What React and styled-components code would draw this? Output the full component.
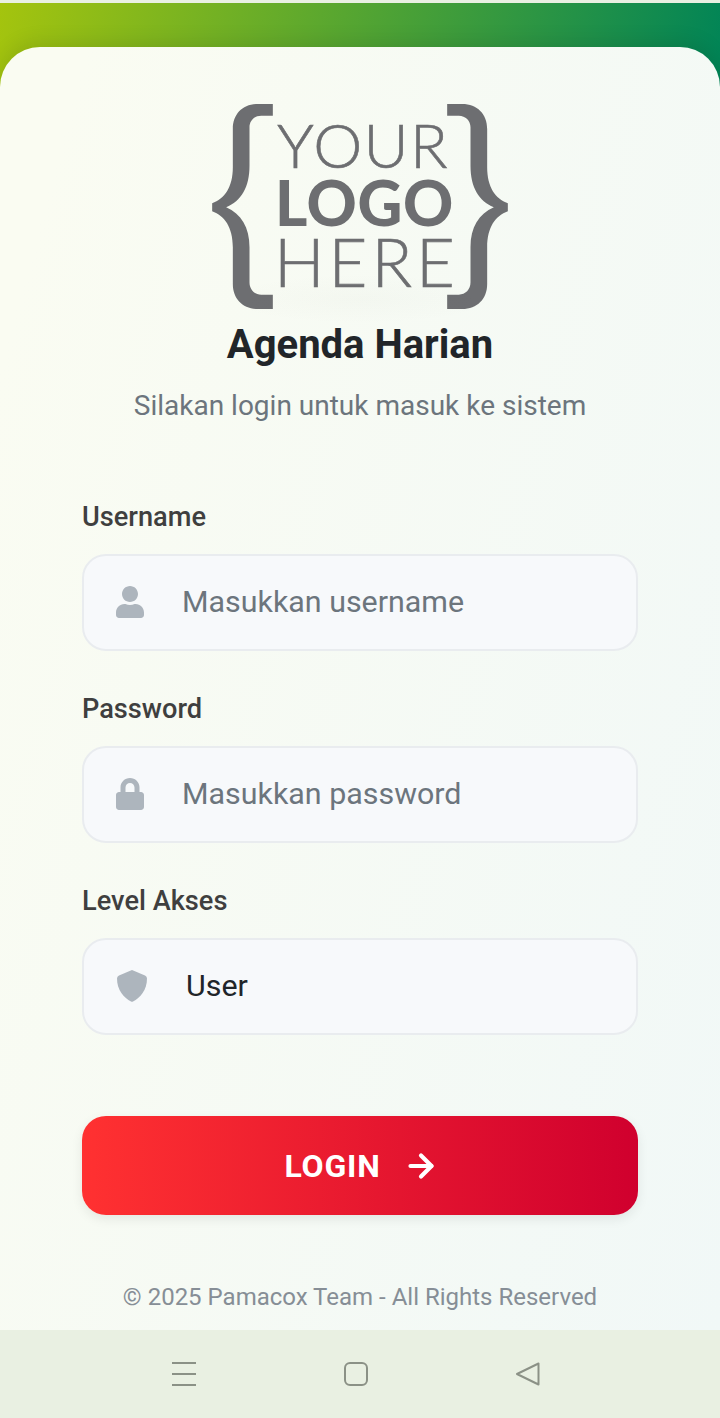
import styled, { createGlobalStyle } from "styled-components";
import { FaUser, FaLock } from "react-icons/fa";
import { ArrowRight } from "lucide-react";

const GlobalStyle = createGlobalStyle`
  * { box-sizing: border-box; }
  html, body { margin: 0; padding: 0; }
  body { font-family: Roboto, "Liberation Sans", sans-serif; background: #e9f0e2; }
`;

const Page = styled.div`
  width: 720px;
  height: 100vh;
  display: flex;
  flex-direction: column;
  overflow: hidden;
  background: #e9f0e2;
`;

const Main = styled.main`
  flex: 1;
  margin-top: 3px;
  padding-top: 44px;
  background: linear-gradient(100deg, #a4c40e 0%, #008457 100%) 0 0 / 100% 100px no-repeat;
  display: flex;
  flex-direction: column;
`;

const Card = styled.div`
  flex: 1;
  border-radius: 40px 40px 0 0;
  background: linear-gradient(105deg, #fafcf2 0%, #fafcf2 8%, #f1f8f7 100%);
  box-shadow: 0 -5px 20px rgba(0, 0, 0, 0.1);
  padding: 56px 82px 0;
  display: flex;
  flex-direction: column;
`;

const Logo = styled.div`
  position: relative;
  align-self: center;
  height: 207px;
  display: flex;
  align-items: center;
  color: #6d6e71;
  font-family: Lato, sans-serif;

  &::after {
    content: "";
    position: absolute;
    left: 10px;
    right: 10px;
    bottom: -14px;
    height: 50px;
    background: radial-gradient(closest-side, rgba(90, 90, 70, 0.025), transparent);
    pointer-events: none;
  }
`;

const Brace = styled.svg`
  width: 61px;
  height: 205px;
  flex: none;
  fill: #6d6e71;
  transform: ${(p) => (p.$flip ? "scaleX(-1)" : "none")};
  margin-left: ${(p) => (p.$flip ? "-5px" : "0")};
`;

const LogoText = styled.div`
  width: 175px;
  margin-left: 4px;
  padding-bottom: 8px;
  display: flex;
  flex-direction: column;
  align-items: flex-start;
`;

const LogoLine = styled.span`
  font-size: ${(p) => p.$size}px;
  font-weight: ${(p) => p.$weight};
  letter-spacing: ${(p) => p.$spacing}px;
  margin-left: ${(p) => p.$shift}px;
  -webkit-text-stroke: ${(p) => (p.$weight < 900 ? "0.6px" : "0")};
  line-height: 58.5px;
  white-space: nowrap;
`;

const Title = styled.h1`
  margin: 11px 0 0;
  font-size: 40px;
  line-height: 48px;
  font-weight: 700;
  color: #212529;
  text-align: center;
`;

const Subtitle = styled.p`
  margin: 20px 0 0;
  font-size: 28px;
  line-height: 34px;
  color: #6c757d;
  text-align: center;
`;

const Form = styled.form`
  margin-top: 78px;
  display: flex;
  flex-direction: column;
`;

const Field = styled.div`
  margin-bottom: 42px;
`;

const Label = styled.label`
  display: block;
  margin-bottom: 21px;
  font-size: 27.2px;
  line-height: 32px;
  font-weight: 500;
  color: #3f3f3f;
`;

const InputBox = styled.div`
  height: 97px;
  padding-left: 32px;
  padding-bottom: 1px;
  display: flex;
  align-items: center;
  background: #f7f9fb;
  border: 2px solid #e9ecef;
  border-radius: 24px;
`;

const IconSlot = styled.span`
  width: 34px;
  flex: none;
  display: flex;
  color: #adb5bd;
  font-size: 32px;

  & > svg.fa {
    margin-left: -2px;
  }
`;

const Shield = styled.svg`
  width: 30px;
  height: 32px;
  margin-left: 1px;
  fill: #adb5bd;
`;

const Input = styled.input`
  flex: 1;
  min-width: 0;
  margin: 0 0 2px 32px;
  border: 0;
  outline: 0;
  padding: 0;
  background: transparent;
  font: 400 30.4px Roboto, sans-serif;
  color: #212529;
  &::placeholder { color: #6c757d; opacity: 1; }
`;

const Select = styled.select`
  flex: 1;
  min-width: 0;
  margin: 0 0 2px 32px;
  border: 0;
  outline: 0;
  padding: 0 0 0 4px;
  appearance: none;
  background: transparent;
  font: 400 30.4px Roboto, sans-serif;
  color: #212529;
`;

const LoginButton = styled.button`
  margin-top: 39px;
  height: 99px;
  border: 0;
  border-radius: 24px;
  background: linear-gradient(90deg, #ff3131 0%, #d0002e 100%);
  box-shadow: 0 4px 12px rgba(0, 0, 0, 0.08);
  color: #fff;
  font: 700 32px Roboto, sans-serif;
  letter-spacing: 0.8px;
  padding-left: 9px;
  display: flex;
  align-items: center;
  justify-content: center;
  gap: 22px;
`;

const Footer = styled.p`
  margin: 67px 0 0;
  font-size: 24px;
  line-height: 30px;
  color: #868e96;
  text-align: center;
  white-space: nowrap;
`;

const NavBar = styled.nav`
  height: 88px;
  flex: none;
  padding: 0 180px 0 172px;
  display: flex;
  align-items: center;
  justify-content: space-between;
  background: #e9f0e2;
`;

const NavIcon = styled.svg`
  width: 24px;
  height: 24px;
  fill: none;
  stroke: #8b9186;
  stroke-width: 2;
  stroke-linejoin: round;
`;

const BracePath = () => (
  <path d="M250 40H205C160 40 130 70 130 115V230C130 290 105 325 68 338V362C105 375 130 410 130 470V580C130 625 160 655 205 655H250V612H215C195 612 180 597 180 575V470C180 410 155 370 110 350C155 330 180 290 180 225V110C180 90 195 75 215 75H250Z" />
);

export default function App() {
  return (
    <Page>
      <GlobalStyle />
      <Main>
        <Card>
          <Logo>
            <Brace viewBox="68 40 182 615"><BracePath /></Brace>
            <LogoText>
              <LogoLine $size={62} $weight={300} $spacing={1.3} $shift={0}>YOUR</LogoLine>
              <LogoLine $size={62} $weight={900} $spacing={0.6} $shift={-2}>LOGO</LogoLine>
              <LogoLine $size={67} $weight={300} $spacing={4} $shift={-3}>HERE</LogoLine>
            </LogoText>
            <Brace $flip viewBox="68 40 182 615"><BracePath /></Brace>
          </Logo>
          <Title>Agenda Harian</Title>
          <Subtitle>Silakan login untuk masuk ke sistem</Subtitle>
          <Form>
            <Field>
              <Label>Username</Label>
              <InputBox>
                <IconSlot><FaUser className="fa" /></IconSlot>
                <Input type="text" placeholder="Masukkan username" />
              </InputBox>
            </Field>
            <Field>
              <Label>Password</Label>
              <InputBox>
                <IconSlot><FaLock className="fa" /></IconSlot>
                <Input type="password" placeholder="Masukkan password" />
              </InputBox>
            </Field>
            <Field>
              <Label>Level Akses</Label>
              <InputBox>
                <IconSlot>
                  <Shield viewBox="0 0 30 32">
                    <path d="M15 0L28 5.5Q30 6.5 30 8.5C30 20 23 28 16 31.5Q15 32 14 31.5C7 28 0 20 0 8.5Q0 6.5 2 5.5Z" />
                  </Shield>
                </IconSlot>
                <Select defaultValue="user">
                  <option value="user">User</option>
                  <option value="admin">Admin</option>
                </Select>
              </InputBox>
            </Field>
            <LoginButton type="button">
              LOGIN
              <ArrowRight size={36} strokeWidth={2.8} />
            </LoginButton>
          </Form>
          <Footer>© 2025 Pamacox Team - All Rights Reserved</Footer>
        </Card>
      </Main>
      <NavBar>
        <NavIcon viewBox="0 0 24 24">
          <path d="M0 1H24M0 12H24M0 23H24" />
        </NavIcon>
        <NavIcon viewBox="0 0 24 24">
          <rect x="1" y="1" width="22" height="22" rx="5" />
        </NavIcon>
        <NavIcon viewBox="0 0 24 24">
          <path d="M22.5 1.5V22.5L1 12Z" />
        </NavIcon>
      </NavBar>
    </Page>
  );
}
